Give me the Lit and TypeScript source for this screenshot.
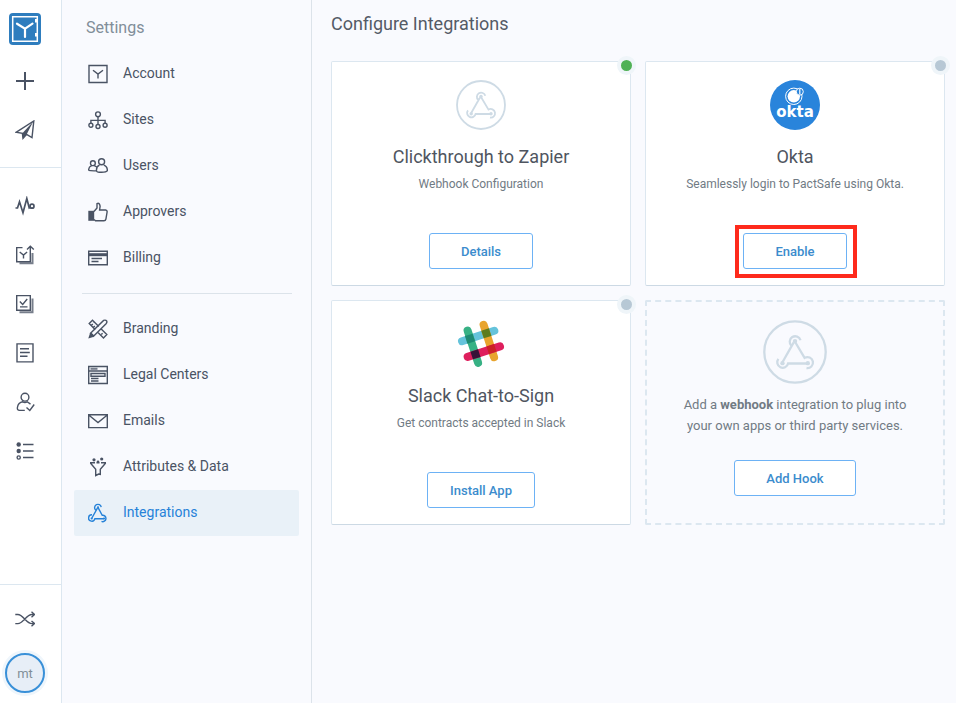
import { LitElement, html, svg, css, nothing, type TemplateResult, type SVGTemplateResult } from "lit";
import { customElement } from "lit/decorators.js";
import { classMap } from "lit/directives/class-map.js";

const hook = svg`
  <path d="M7.600 7A3.300 3.300 0 1 1 13.200 4.200M4 11.800A3.200 3.200 0 1 0 6.900 15.700H15.800M13.500 18.400A3.200 3.200 0 1 0 14.200 12.300L10.200 4.800M9.400 5.200L3.900 15"/>
  <circle class="dot" cx="10" cy="4.300" r="1.100"/><circle class="dot" cx="3.700" cy="15.500" r="1.100"/><circle class="dot" cx="16" cy="15.500" r="1.100"/>`;

const icons: Record<string, SVGTemplateResult> = {
  plus: svg`<path class="heavy" d="M10 1v18M1 10h18"/>`,
  plane: svg`<path d="M1 12.300L18.800 1 17 17.600l-5.400-3.200L8 18.400l-.6-5L1 12.300z"/><path class="dot" d="M7.400 13.200L18.200 1.600 11.600 14.400 8 18.500z"/>`,
  pulse: svg`<path class="bold" d="M.5 12h2l2-6.200 3.500 11L11.800 2.500l2.400 9.300 1.200-.8"/><circle class="bold" cx="17" cy="10.200" r="2"/>`,
  send: svg`<path d="M7.500 2.600H1.700v14.200h13.600V6M15.300 1v7M12 4.500L15.300 1.200l3.500 3.300M4.700 7l3.800 3 3.600-3M8.500 10v3.500"/><path class="band" d="M4.500 18.300h13V8"/>`,
  checks: svg`<path d="M1.700 1.600h13.600v14.600H1.700zM5 12.900h7.500M4.800 7.600l2.900 2.900 4.500-5.500"/><path class="band" d="M4.500 18.200h13V4.500"/>`,
  doc: svg`<path d="M2 .900h16v18H2zM5 5.800h9M5 9.500h9.800M5 13.200h7.500"/>`,
  person: svg`<circle cx="10" cy="5.200" r="3.900"/><path d="M9.800 18.400H4.500Q2 18.300 2.400 15.500q.8-5 5.400-5.700 2 1.300 4.400 0l3.300 2.300M11.500 15.400l3.300 3.100 4.400-6"/>`,
  list: svg`<path d="M8 3.500h10.500M8 10h10.500M8 16.500h10.500"/><circle class="dot" cx="3.700" cy="3.500" r="2.200"/><circle class="dot" cx="3.700" cy="10" r="2.200"/><circle cx="3.700" cy="16.500" r="1.600"/>`,
  shuffle: svg`<path d="M.3 5.500h2.500C8.500 5.500 11 14.600 17 14.600h2.500M.3 14.600h2.500C8.500 14.600 11 5.500 17 5.500h2.500M16.500 2.800l3 2.700-3 2.700M16.500 11.900l3 2.700-3 2.700"/>`,
  account: svg`<path d="M1 1.500h18v17H1zM5 6.200l5 3.800 5-3.800M10 10v4.500"/>`,
  sites: svg`<circle cx="10" cy="4.300" r="2.400"/><circle cx="2.900" cy="15.300" r="2"/><circle cx="10" cy="16.500" r="2"/><circle cx="17.100" cy="15.300" r="2"/><path d="M10 6.800v7.500M2.900 13.200v-2.800h14.200v2.800"/>`,
  users: svg`<circle cx="13.600" cy="5.700" r="3"/><circle cx="4.900" cy="7.200" r="2.400"/><path d="M11.500 9.200C8.800 10.300 8.300 12.500 8.500 14.700q0 1.600 5 1.600t5.900-1.600c0-3-1.300-4.700-3.600-5.500M3.600 9.700Q.5 11 .7 13.900q0 1.100 7.500.9M6.400 9.700l2.300 1.300"/>`,
  thumb: svg`<path d="M6 9.500L9 6V1.600q2.500-1.300 3.100 2.600L11.600 8h6q1.700.2 1.500 2l-1.200 7.200q-.3 1.600-2 1.600H7.500L6 17.500"/><path class="dot" d="M.3 8.800h5.900v10H.3z"/>`,
  billing: svg`<path d="M.7 3.200h18.600v13.600H.7zM3.500 10.500h10.500M3.500 13.500h7"/><path class="thick" d="M.7 6.700h18.600"/>`,
  branding: svg`<path d="M7.300 10.700L1.200 4.500 4.500 1.200l6.300 6.300M12.700 9.500l6.100 6.100-3.300 3.300-6-6M3.500 6.300l1.300-1.300M5.500 8.400l1.300-1.300M13.300 15.500l1.300-1.300M5.500 3.500l1-1M2.500 14.200L15.600 1.400q2.200-.8 3.200.8.3 1.300-.5 2.200L5.500 17.200z"/><path class="dot" d="M.3 19.500l1.600-5 1.800-.6 2.300 2.400-.8 1.600z"/>`,
  legal: svg`<path d="M.7 1.500h18.600v17H.7zM.7 6h18.600M3 8.500h14v2.800H3zM3 13.500h7.500M3 16h7.500"/><path class="band" d="M2.500 3.800h7"/>`,
  mail: svg`<path d="M.7 3.700h18.600v12.900H.7zM1 4.200l9 7.300 9-7.300"/>`,
  funnel: svg`<path d="M2 5.700h5M8.500 5.700h3M13 5.700h5M2.400 6l5.300 6.200v6.300l3-1.500 1.600.3v-5.100L17.700 6"/><circle class="dot" cx="6" cy="2.800" r="1.600"/><circle class="dot" cx="13.700" cy="2" r="1.600"/><circle class="dot" cx="10" cy="4.800" r="1.300"/>`,
  hook,
};

const glyph = (name: string) =>
  html`<svg class="icon" viewBox="0 0 20 20" aria-hidden="true">${icons[name]}</svg>`;

const iconStyles = css`
  .icon { width: 20px; height: 20px; flex: none; fill: none; stroke: currentColor; stroke-width: 1.4; display: block; }
  .icon .heavy { stroke-width: 2; }
  .icon .bold { stroke-width: 1.7; }
  .icon .band { stroke-width: 2; opacity: .75; }
  .icon .thick { stroke-width: 3; }
  .icon .dot { fill: currentColor; stroke: none; }
`;

const base = css`
  * { box-sizing: border-box; }
  button { font: inherit; cursor: pointer; }
`;

@customElement("app-rail")
class AppRail extends LitElement {
  static styles = [base, iconStyles, css`
    :host { display: flex; flex-direction: column; width: 62px; padding: 13px 0 10px; background: #fff; border-right: 1px solid #dce7f0; color: #4a5364; }
    .group { display: flex; flex-direction: column; align-items: flex-start; }
    .first { border-bottom: 1px solid #dce7f0; padding-bottom: 13px; margin-bottom: 13px; }
    .last { border-top: 1px solid #dce7f0; padding-top: 9px; margin-top: auto; }
    .logo { display: block; margin: 0 9px 11px; }
    .logo svg { display: block; }
    .tool { width: 50px; height: 49px; padding: 0; border: 0; background: none; color: inherit; display: grid; place-items: center; }
    .avatar { width: 40px; height: 40px; margin: 10px 5px 0; padding: 0; border: 2px solid #3990d8; border-radius: 50%; background: #e7eef7; box-shadow: 0 0 0 3px #eff6fc; color: #818e99; font-size: 13px; }
  `];

  private tool(name: string, label: string) {
    return html`<button class="tool" aria-label=${label}>${glyph(name)}</button>`;
  }

  render() {
    return html`
      <div class="group first">
        <a class="logo" href="#home" aria-label="Home">
          <svg width="32" height="32" viewBox="0 0 32 32">
            <rect width="32" height="32" rx="4" fill="#2e7dbe"/>
            <path d="M3.700 3.700h24.600v24.600H3.700z" fill="none" stroke="#fff" stroke-width="1.500"/>
            <path d="M27.500 6v3.500M27.500 20v3.500" stroke="#fff" stroke-width="3"/>
            <path d="M8 10.700l8 5 7.500-5M16 15.700V24" fill="none" stroke="#fff" stroke-width="2.200" stroke-linecap="round"/>
          </svg>
        </a>
        ${this.tool("plus", "New")}${this.tool("plane", "Send")}
      </div>
      <nav class="group" aria-label="Main">
        ${this.tool("pulse", "Activity")}${this.tool("send", "Requests")}${this.tool("checks", "Contracts")}
        ${this.tool("doc", "Documents")}${this.tool("person", "Signers")}${this.tool("list", "Groups")}
      </nav>
      <div class="group last">
        ${this.tool("shuffle", "Switch site")}
        <button class="avatar">mt</button>
      </div>`;
  }
}

@customElement("settings-menu")
class SettingsMenu extends LitElement {
  static styles = [base, iconStyles, css`
    :host { display: block; width: 250px; padding: 18px 12px; border-right: 1px solid #dce3ea; color: #4a5364; }
    h2 { margin: 0 12px 13px; font-size: 16px; line-height: 20px; font-weight: 400; color: #818e99; }
    a { display: flex; align-items: center; gap: 15px; height: 46px; padding: 0 14px; border-radius: 2px; color: inherit; text-decoration: none; font-size: 14px; }
    a span { padding-bottom: 2px; }
    a.current { background: #e9f1f8; color: #2682d8; }
    hr { height: 1px; margin: 12px 7px 12px 8px; border: 0; background: #dce3ea; }
  `];

  private link(icon: string, label: string, current = false) {
    return html`<a href="#${icon}" class=${classMap({ current })} aria-current=${current ? "page" : nothing}>
      ${glyph(icon)}<span>${label}</span></a>`;
  }

  render() {
    return html`
      <h2>Settings</h2>
      <nav aria-label="Settings">
        ${this.link("account", "Account")}
        ${this.link("sites", "Sites")}
        ${this.link("users", "Users")}
        ${this.link("thumb", "Approvers")}
        ${this.link("billing", "Billing")}
        <hr />
        ${this.link("branding", "Branding")}
        ${this.link("legal", "Legal Centers")}
        ${this.link("mail", "Emails")}
        ${this.link("funnel", "Attributes & Data")}
        ${this.link("hook", "Integrations", true)}
      </nav>`;
  }
}

const hookLogo = html`
  <svg class="hook-logo" viewBox="0 0 50 50" aria-hidden="true">
    <circle cx="25" cy="25" r="24"/>
    <path d="M22.300 20.200A4.300 4.300 0 1 1 29.300 15.800M12 30.400A4.300 4.300 0 1 0 19.600 34H34.500M34 37.500A4.300 4.300 0 1 0 32.500 29.600L25 17M24 17.500L15.200 33"/>
    <circle class="dot" cx="25" cy="16.500" r="1.700"/><circle class="dot" cx="15.200" cy="33.700" r="1.700"/><circle class="dot" cx="35" cy="33.700" r="1.700"/>
  </svg>`;

const oktaLogo = html`
  <svg viewBox="0 0 50 50" aria-hidden="true">
    <circle cx="25" cy="25" r="25" fill="#2984db"/>
    <g fill="none" stroke="#fff">
      <circle cx="23.800" cy="16.300" r="8.200" stroke-width="1"/>
      <circle cx="23.800" cy="16.300" r="6.200" fill="#fff" stroke="none"/>
      <circle cx="29.800" cy="11.700" r="3.500" fill="#2984db" stroke-width="1"/>
      <path d="M29.800 9v5.500" stroke-width="1.200"/>
    </g>
    <text class="wordmark" x="25" y="37" text-anchor="middle" fill="#fff">okta</text>
  </svg>`;

const bar = (x: number, y: number, turn: number, fill: string) =>
  svg`<rect x="-63" y="-12" width="126" height="24" rx="12" fill=${fill} transform="translate(${x} ${y}) rotate(${turn})"/>`;
const crossing = (x: number, y: number, fill: string) =>
  svg`<rect x="-12" y="-12" width="24" height="24" fill=${fill} transform="translate(${x} ${y}) rotate(-18)"/>`;

const slackLogo = html`
  <svg viewBox="393 312 150 150" aria-hidden="true">
    ${bar(459.5, 363, -18, "#65c3db")}${bar(443.5, 395, 72, "#37b184")}
    ${bar(491.5, 378, 72, "#e8a42d")}${bar(476.5, 410, -18, "#de1f5d")}
    ${crossing(435, 371, "#1e8a72")}${crossing(484, 355, "#5b7c1d")}
    ${crossing(451.5, 418, "#361238")}${crossing(499.5, 402, "#cc2126")}
  </svg>`;

@customElement("integration-card")
class IntegrationCard extends LitElement {
  static properties = { heading: {}, text: {}, action: {}, status: {}, marked: { type: Boolean }, logo: { attribute: false } };
  declare heading: string;
  declare text: string;
  declare action: string;
  declare status: string;
  declare marked: boolean;
  declare logo: TemplateResult;

  static styles = [base, css`
    :host { position: relative; box-sizing: border-box; display: flex; flex-direction: column; align-items: center; min-height: 225px; padding: 18px 18px 16px; background: #fff; border: 1px solid #dce7f0; border-bottom-color: #ccd9e4; border-radius: 2px; text-align: center; }
    svg { display: block; width: 50px; height: 50px; }
    .hook-logo { fill: none; stroke: #cedbe5; stroke-width: 1.8; }
    .hook-logo .dot { fill: #cedbe5; stroke: none; }
    .wordmark { font: bold 15px "DejaVu Sans", sans-serif; }
    h3 { margin: 15px 0 0; font-size: 18px; line-height: 24px; font-weight: 400; color: #4f5560; }
    p { margin: 7px 0 0; font-size: 12px; line-height: 16px; color: #717b84; }
    .action { position: relative; margin-top: auto; }
    .marked::after { content: ""; position: absolute; inset: -8px -10px -9px -8px; border: 4px solid #fe2a1c; pointer-events: none; }
    button { display: block; min-width: 104px; height: 36px; padding: 0 22px; background: #fff; border: 1px solid #6db2f5; border-radius: 3px; color: #3b8ccd; font-size: 13px; font-weight: 500; }
    .status { position: absolute; top: -6px; right: -6px; width: 19px; height: 19px; border: 4px solid #eff5f9; border-radius: 50%; background: #b7c8d5; }
    .status.on { background: #50b155; }
  `];

  render() {
    return html`
      <span class=${classMap({ status: true, on: this.status === "on" })} role="img" aria-label=${this.status === "on" ? "Enabled" : "Disabled"}></span>
      ${this.logo}
      <h3>${this.heading}</h3>
      <p>${this.text}</p>
      <div class=${classMap({ action: true, marked: !!this.marked })}><button>${this.action}</button></div>`;
  }
}

@customElement("hook-card")
class HookCard extends LitElement {
  static styles = [base, css`
    :host { box-sizing: border-box; display: flex; flex-direction: column; align-items: center; min-height: 225px; padding: 18px 18px 27px; border: 2px dashed #dce7f0; border-radius: 2px; text-align: center; }
    svg { display: block; width: 64px; height: 64px; }
    .hook-logo { fill: none; stroke: #cedbe5; stroke-width: 1.8; }
    .hook-logo .dot { fill: #cedbe5; stroke: none; }
    p { max-width: 240px; margin: 10px 0 0; font-size: 13px; line-height: 21px; color: #717b84; }
    button { display: block; margin-top: auto; height: 36px; min-width: 122px; padding: 0 30px; background: #fff; border: 1px solid #6db2f5; border-radius: 3px; color: #3b8ccd; font-size: 13px; font-weight: 500; }
  `];

  render() {
    return html`${hookLogo}
      <p>Add a <b>webhook</b> integration to plug into your own apps or third party services.</p>
      <button>Add Hook</button>`;
  }
}

@customElement("app-root")
class AppRoot extends LitElement {
  static styles = [base, css`
    :host { display: flex; min-height: 100vh; background: #f9fafe; font-family: Roboto, "Liberation Sans", sans-serif; }
    app-rail, settings-menu { flex: none; }
    main { flex: 1; min-width: 0; padding: 12px 11px 19px 19px; }
    h1 { margin: 0 0 25px; font-size: 18px; line-height: 24px; font-weight: 400; color: #545b66; }
    .cards { display: grid; grid-template-columns: repeat(auto-fill, minmax(280px, 1fr)); gap: 14px; }
  `];

  render() {
    return html`
      <app-rail></app-rail>
      <settings-menu></settings-menu>
      <main>
        <h1>Configure Integrations</h1>
        <div class="cards">
          <integration-card heading="Clickthrough to Zapier" text="Webhook Configuration" action="Details" status="on" .logo=${hookLogo}></integration-card>
          <integration-card heading="Okta" text="Seamlessly login to PactSafe using Okta." action="Enable" status="off" marked .logo=${oktaLogo}></integration-card>
          <integration-card heading="Slack Chat-to-Sign" text="Get contracts accepted in Slack" action="Install App" status="off" .logo=${slackLogo}></integration-card>
          <hook-card></hook-card>
        </div>
      </main>`;
  }
}
